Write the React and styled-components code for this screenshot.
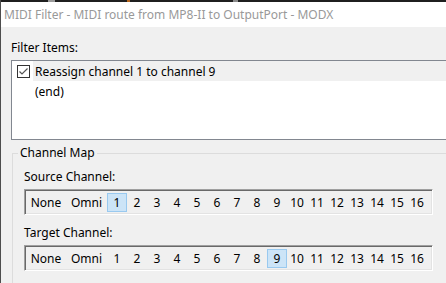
import React from 'react'
import styled, { createGlobalStyle } from 'styled-components'

const GlobalStyle = createGlobalStyle`
  html, body {
    margin: 0;
    padding: 0;
    background: #f0f0f0;
  }
`

const Frame = styled.div`
  width: 446px;
  height: 283px;
  box-sizing: border-box;
  overflow: hidden;
  display: flex;
  flex-direction: column;
  border-left: 1px solid #4d4d4d;
  background: #f0f0f0;
  font-family: "Noto Sans", "Open Sans", sans-serif;
  font-size: 12px;
  color: #000;
`

// the dark edge of whatever sits above the dialog, with a few bits of its content
const TopStrip = styled.div`
  flex-shrink: 0;
  height: 2px;
  margin-left: -1px;
  background:
    linear-gradient(90deg,
      transparent 48px, #9a9a9a 48px, #9a9a9a 55px, transparent 55px,
      transparent 127px, #b5651d 127px, #b5651d 130px, transparent 130px,
      transparent 233px, #8a8a8a 233px, #8a8a8a 238px, transparent 238px),
    #1f1f1f;
`

const TitleBar = styled.div`
  flex-shrink: 0;
  height: 25px;
  display: flex;
  align-items: center;
  padding-left: 3px;
  background: #fff;
  color: #999;
  white-space: nowrap;
`

const Client = styled.div`
  flex-shrink: 0;
  width: 520px;
  padding: 13px 0 0 10px;
`

const Label = styled.div`
  line-height: 16px;
  white-space: nowrap;
  margin-top: ${p => p.gap || 0}px;
`

const ListBox = styled.div`
  margin-top: 4px;
  height: 80px;
  box-sizing: border-box;
  border: 1px solid #828790;
  background: #fff;
`

const Row = styled.div`
  display: flex;
  align-items: center;
  height: 20px;
`

const CheckCell = styled.div`
  width: 21px;
  height: 100%;
  box-sizing: border-box;
  padding-left: 5px;
  display: flex;
  align-items: center;
`

const ItemText = styled.div`
  flex: 1;
  height: 100%;
  display: flex;
  align-items: center;
  padding-left: 2px;
  background: ${p => (p.selected ? '#f0f0f0' : 'transparent')};
`

const GroupBox = styled.fieldset`
  margin: 5px 0 0 1px;
  padding: 0;
  border: 1px solid #dcdcdc;
  min-width: 0;
`

const Legend = styled.legend`
  margin-left: 5px;
  padding: 0 2px;
  line-height: 16px;
`

const GroupBody = styled.div`
  padding: 8px 0 30px 11px;
`

const ChannelBar = styled.div`
  margin-top: 4px;
  width: 409px;
  height: 26px;
  box-sizing: border-box;
  display: flex;
  align-items: center;
  padding-left: 1px;
  border: 1px solid;
  border-color: #a0a0a0 #fff #fff #a0a0a0;
  box-shadow: inset 1px 1px 0 #696969, inset -1px -1px 0 #e3e3e3;
  background: #f0f0f0;
`

const Cell = styled.div`
  width: ${p => p.w}px;
  height: 19px;
  box-sizing: border-box;
  display: flex;
  align-items: center;
  justify-content: center;
  border: 1px solid ${p => (p.selected ? '#99c9ef' : 'transparent')};
  background: ${p => (p.selected ? '#cce4f7' : 'transparent')};
  white-space: nowrap;
`

const Checkbox = () => (
  <svg width="13" height="13" viewBox="0 0 13 13">
    <rect x="0.5" y="0.5" width="12" height="12" fill="#fff" stroke="#333" />
    <path d="M2.5 6.5 L5 9 L10.5 3.5" fill="none" stroke="#555" strokeWidth="1.2" />
  </svg>
)

const channels = Array.from({ length: 16 }, (_, i) => String(i + 1))

const ChannelStrip = ({ selected }) => (
  <ChannelBar>
    <Cell w={40}>None</Cell>
    <Cell w={41}>Omni</Cell>
    {channels.map(c => (
      <Cell key={c} w={20} selected={c === selected}>
        {c}
      </Cell>
    ))}
  </ChannelBar>
)

export default function App() {
  return (
    <>
      <GlobalStyle />
      <Frame>
        <TopStrip />
        <TitleBar>MIDI Filter - MIDI route from MP8-II to OutputPort - MODX</TitleBar>
        <Client>
          <Label>Filter Items:</Label>
          <ListBox>
            <Row>
              <CheckCell>
                <Checkbox />
              </CheckCell>
              <ItemText selected>Reassign channel 1 to channel 9</ItemText>
            </Row>
            <Row>
              <CheckCell />
              <ItemText>(end)</ItemText>
            </Row>
          </ListBox>
          <GroupBox>
            <Legend>Channel Map</Legend>
            <GroupBody>
              <Label>Source Channel:</Label>
              <ChannelStrip selected="1" />
              <Label gap={10}>Target Channel:</Label>
              <ChannelStrip selected="9" />
            </GroupBody>
          </GroupBox>
        </Client>
      </Frame>
    </>
  )
}
